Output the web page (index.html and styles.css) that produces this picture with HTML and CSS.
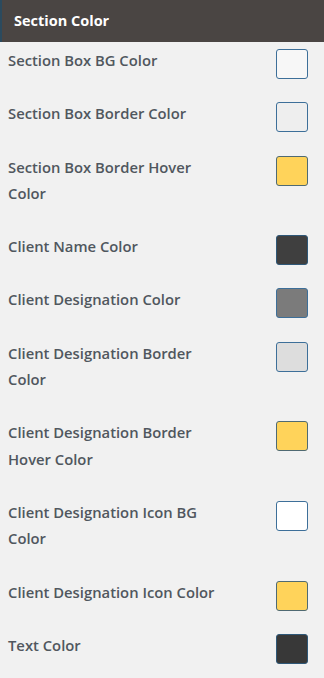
FILE: index.html
```html
<!DOCTYPE html>
<html>
<head>
<meta charset="utf-8">
<link rel="stylesheet" href="styles.css">
</head>
<body>
<div class="panel">
  <div class="header">Section Color</div>
  <div class="rows">
    <div class="row"><div class="label">Section Box BG Color</div><div class="swatch c-f7"></div></div>
    <div class="row"><div class="label">Section Box Border Color</div><div class="swatch c-ee"></div></div>
    <div class="row"><div class="label">Section Box Border Hover Color</div><div class="swatch c-yellow"></div></div>
    <div class="row"><div class="label">Client Name Color</div><div class="swatch c-dark"></div></div>
    <div class="row"><div class="label">Client Designation Color</div><div class="swatch c-gray"></div></div>
    <div class="row"><div class="label">Client Designation Border Color</div><div class="swatch c-dd"></div></div>
    <div class="row"><div class="label">Client Designation Border Hover Color</div><div class="swatch c-yellow"></div></div>
    <div class="row"><div class="label">Client Designation Icon BG Color</div><div class="swatch c-white"></div></div>
    <div class="row"><div class="label">Client Designation Icon Color</div><div class="swatch c-yellow"></div></div>
    <div class="row"><div class="label">Text Color</div><div class="swatch c-text"></div></div>
  </div>
</div>
</body>
</html>
```
FILE: styles.css
```css
html, body {
  margin: 0;
  padding: 0;
  background: #f1f1f1;
}
body {
  font-family: "Open Sans", "Noto Sans", sans-serif;
}
.panel {
  width: 324px;
}
.header {
  height: 42px;
  box-sizing: border-box;
  background: #4a4543;
  border-left: 2px solid #2b4a5e;
  color: #ffffff;
  font-weight: 700;
  font-size: 14.5px;
  line-height: 42px;
  padding-left: 12px;
}
.row {
  display: flex;
  justify-content: space-between;
  align-items: flex-start;
  padding: 5px 16px 0 8px;
}
.label {
  width: 222px;
  padding-bottom: 22px;
  font-size: 14.8px;
  font-weight: 600;
  line-height: 26.3px;
  color: #50575e;
}
.swatch {
  width: 30px;
  height: 28px;
  margin-top: 2px;
  border: 1px solid #3d6f99;
  border-radius: 3px;
  flex: none;
}
.c-f7 { background: #f7f7f7; }
.c-ee { background: #eeeeee; }
.c-yellow { background: #ffd35a; border-color: #4f6a73; }
.c-dark { background: #3f3f3f; border-color: #2f5878; }
.c-gray { background: #7b7b7b; }
.c-dd { background: #dddddd; }
.c-white { background: #ffffff; }
.c-text { background: #383838; border-color: #2f5878; }
```
